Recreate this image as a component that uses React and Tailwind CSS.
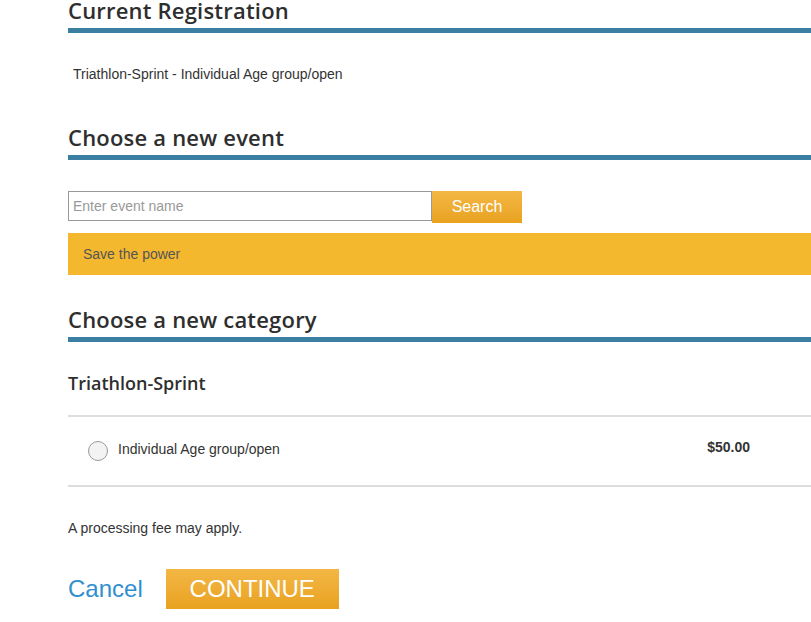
import React from 'react';

const SectionTitle = ({ children, className = '' }) => (
    <div className={className}>
        <h2 className="h-[28px] leading-[21px] text-[22px] font-semibold tracking-[0.2px] text-[#2e2e2e] font-['Open_Sans',sans-serif]">
            {children}
        </h2>
        <div className="h-[5px] bg-[#3a7fa1]" />
    </div>
);

const App = () => {
    return (
        <div className="w-[811px] h-[622px] overflow-hidden bg-white font-['Liberation_Sans',Arial,sans-serif] text-[#333]">
            <div className="ml-[68px] w-[760px]">
                {/* Current registration */}
                <SectionTitle>Current Registration</SectionTitle>
                <p className="mt-[32px] pl-[5px] text-[14px] leading-[18px]">Triathlon-Sprint - Individual Age group/open</p>

                {/* Event search */}
                <SectionTitle className="mt-[44px]">Choose a new event</SectionTitle>
                <div className="mt-[31px] flex items-start">
                    <input
                        type="text"
                        placeholder="Enter event name"
                        className="w-[364px] h-[30px] border border-[#999] px-[4px] text-[14px] placeholder:text-[#999] outline-none"
                    />
                    <button className="w-[90px] h-[32px] bg-gradient-to-b from-[#f4b744] to-[#e8a21e] text-white text-[16px]">
                        Search
                    </button>
                </div>
                <div className="mt-[10px] h-[42px] bg-[#f4b82e] flex items-center pl-[15px] text-[14px] text-[#555]">
                    Save the power
                </div>

                {/* Category */}
                <SectionTitle className="mt-[34px]">Choose a new category</SectionTitle>
                <h3 className="mt-[30px] h-[24px] leading-[22px] text-[18px] font-semibold text-[#2e2e2e] font-['Open_Sans',sans-serif]">
                    Triathlon-Sprint
                </h3>
                <div className="mt-[19px] border-y-2 border-[#ddd] h-[72px] flex items-center">
                    <span className="ml-[20px] w-[20px] h-[20px] rounded-full border border-[#999] bg-[#f3f3f3]" />
                    <span className="ml-[10px] text-[14px] leading-[18px] -mt-[4px]">Individual Age group/open</span>
                    <span className="ml-auto mr-[78px] text-[14px] leading-[18px] -mt-[8px] font-bold">$50.00</span>
                </div>

                <p className="mt-[31px] text-[14px] leading-[20px]">A processing fee may apply.</p>

                <div className="mt-[31px] flex items-center">
                    <a className="text-[24px] text-[#3090cf]">Cancel</a>
                    <button className="ml-[23px] w-[173px] h-[40px] bg-gradient-to-b from-[#f4b744] to-[#e8a21e] text-white text-[24px]">
                        CONTINUE
                    </button>
                </div>
            </div>
        </div>
    );
};

export default App;
